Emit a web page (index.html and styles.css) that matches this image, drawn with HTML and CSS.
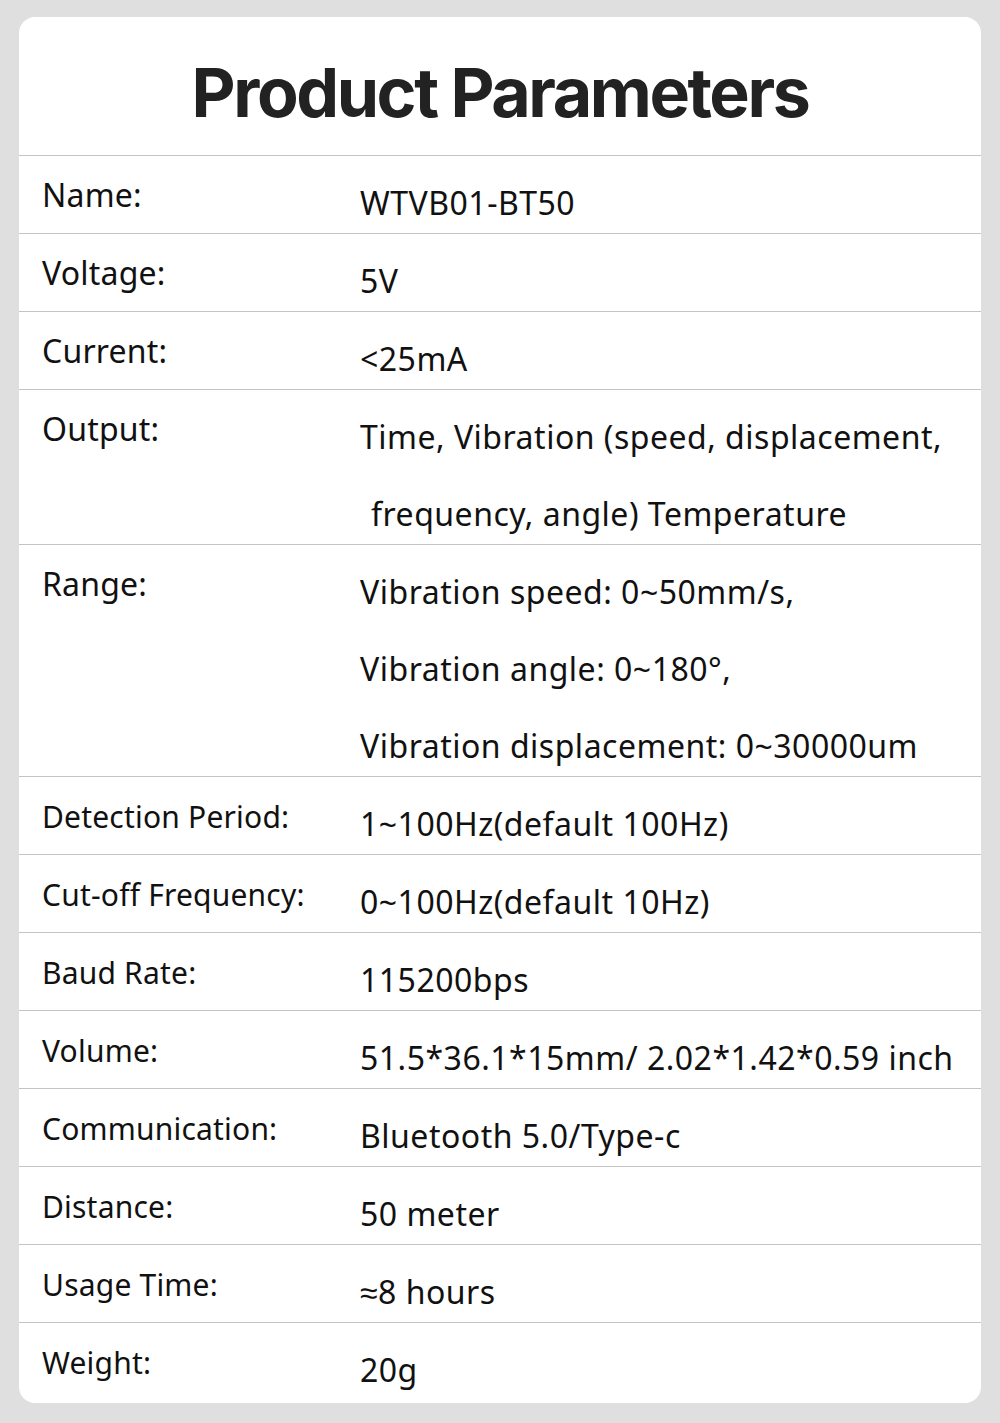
FILE: index.html
```html
<!DOCTYPE html>
<html lang="en">
<head>
    <meta charset="UTF-8">
    <meta name="viewport" content="width=device-width, initial-scale=1.0">
    <title>Product Parameters</title>
    <link rel="stylesheet" href="styles.css">
</head>
<body>
    <div class="card">
        <h1>Product Parameters</h1>
        <div class="param-row">
            <div class="label big">Name:</div>
            <div class="value"><div class="line">WTVB01-BT50</div></div>
        </div>
        <div class="param-row">
            <div class="label big">Voltage:</div>
            <div class="value"><div class="line">5V</div></div>
        </div>
        <div class="param-row">
            <div class="label big">Current:</div>
            <div class="value"><div class="line">&lt;25mA</div></div>
        </div>
        <div class="param-row">
            <div class="label big">Output:</div>
            <div class="value">
                <div class="line">Time, Vibration (speed, displacement,</div>
                <div class="line indent">frequency, angle) Temperature</div>
            </div>
        </div>
        <div class="param-row">
            <div class="label big">Range:</div>
            <div class="value">
                <div class="line">Vibration speed: 0~50mm/s,</div>
                <div class="line">Vibration angle: 0~180°,</div>
                <div class="line">Vibration displacement: 0~30000um</div>
            </div>
        </div>
        <div class="param-row">
            <div class="label">Detection Period:</div>
            <div class="value"><div class="line">1~100Hz(default 100Hz)</div></div>
        </div>
        <div class="param-row">
            <div class="label">Cut-off Frequency:</div>
            <div class="value"><div class="line">0~100Hz(default 10Hz)</div></div>
        </div>
        <div class="param-row">
            <div class="label">Baud Rate:</div>
            <div class="value"><div class="line">115200bps</div></div>
        </div>
        <div class="param-row">
            <div class="label">Volume:</div>
            <div class="value"><div class="line">51.5*36.1*15mm/ 2.02*1.42*0.59 inch</div></div>
        </div>
        <div class="param-row">
            <div class="label">Communication:</div>
            <div class="value"><div class="line">Bluetooth 5.0/Type-c</div></div>
        </div>
        <div class="param-row">
            <div class="label">Distance:</div>
            <div class="value"><div class="line">50 meter</div></div>
        </div>
        <div class="param-row">
            <div class="label">Usage Time:</div>
            <div class="value"><div class="line">≈8 hours</div></div>
        </div>
        <div class="param-row">
            <div class="label">Weight:</div>
            <div class="value"><div class="line">20g</div></div>
        </div>
    </div>
</body>
</html>
```

FILE: styles.css
```css
body {
    margin: 0;
    padding: 17px 19px 23px;
    background-color: #dfdfdf;
    font-family: 'Noto Sans', sans-serif;
    color: #111;
}
.card {
    background-color: #fff;
    border-radius: 16px;
    overflow: hidden;
}
h1 {
    margin: 0;
    height: 138px;
    line-height: 150px;
    border-bottom: 1px solid #c4c4c4;
    font-family: 'Inter', sans-serif;
    font-weight: 700;
    font-size: 68px;
    letter-spacing: -2.4px;
    text-align: center;
    color: #222;
}
.param-row {
    display: grid;
    grid-template-columns: 318px 1fr;
    padding: 8px 0 0 23px;
    border-bottom: 1px solid #c4c4c4;
}
.param-row:last-child {
    border-bottom: none;
    padding-bottom: 3px;
}
.label {
    font-size: 30px;
    line-height: 64px;
    letter-spacing: 0.2px;
}
.label.big {
    font-size: 32px;
    line-height: 62px;
}
.value {
    font-size: 32px;
    letter-spacing: 0.5px;
}
.line {
    line-height: 77px;
    white-space: nowrap;
}
.line:last-child {
    height: 69px;
}
.indent {
    padding-left: 11px;
}
```
